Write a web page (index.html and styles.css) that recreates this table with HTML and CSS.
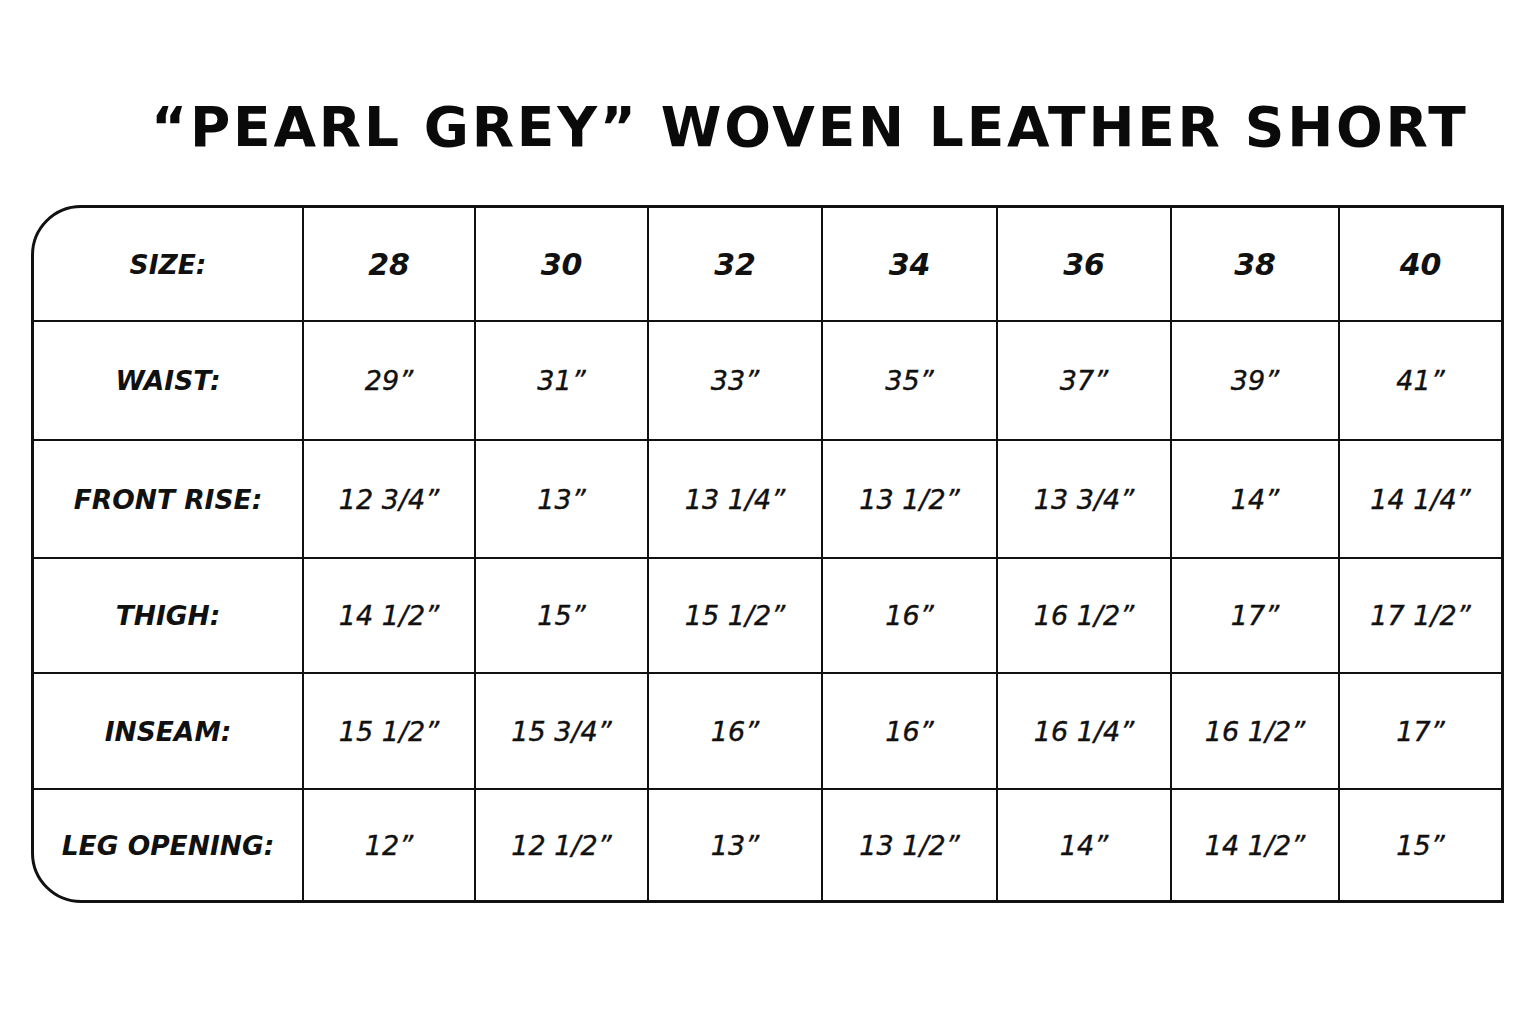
FILE: index.html
```html
<!DOCTYPE html>
<html>
<head>
<meta charset="utf-8">
<link rel="stylesheet" href="styles.css">
</head>
<body>
<div class="page">
  <h1 class="title">“PEARL GREY” WOVEN LEATHER SHORT</h1>
  <div class="chart">
    <div class="cell label">SIZE:</div>
    <div class="cell head">28</div>
    <div class="cell head">30</div>
    <div class="cell head">32</div>
    <div class="cell head">34</div>
    <div class="cell head">36</div>
    <div class="cell head">38</div>
    <div class="cell head last">40</div>

    <div class="cell label">WAIST:</div>
    <div class="cell">29”</div>
    <div class="cell">31”</div>
    <div class="cell">33”</div>
    <div class="cell">35”</div>
    <div class="cell">37”</div>
    <div class="cell">39”</div>
    <div class="cell last">41”</div>

    <div class="cell label">FRONT RISE:</div>
    <div class="cell">12 3/4”</div>
    <div class="cell">13”</div>
    <div class="cell">13 1/4”</div>
    <div class="cell">13 1/2”</div>
    <div class="cell">13 3/4”</div>
    <div class="cell">14”</div>
    <div class="cell last">14 1/4”</div>

    <div class="cell label">THIGH:</div>
    <div class="cell">14 1/2”</div>
    <div class="cell">15”</div>
    <div class="cell">15 1/2”</div>
    <div class="cell">16”</div>
    <div class="cell">16 1/2”</div>
    <div class="cell">17”</div>
    <div class="cell last">17 1/2”</div>

    <div class="cell label">INSEAM:</div>
    <div class="cell">15 1/2”</div>
    <div class="cell">15 3/4”</div>
    <div class="cell">16”</div>
    <div class="cell">16”</div>
    <div class="cell">16 1/4”</div>
    <div class="cell">16 1/2”</div>
    <div class="cell last">17”</div>

    <div class="cell label bottom">LEG OPENING:</div>
    <div class="cell bottom">12”</div>
    <div class="cell bottom">12 1/2”</div>
    <div class="cell bottom">13”</div>
    <div class="cell bottom">13 1/2”</div>
    <div class="cell bottom">14”</div>
    <div class="cell bottom">14 1/2”</div>
    <div class="cell bottom last">15”</div>
  </div>
</div>
</body>
</html>
```
FILE: styles.css
```css
html, body {
  margin: 0;
  padding: 0;
  background: #ffffff;
}
.page {
  width: 1536px;
  height: 1024px;
  display: flex;
  flex-direction: column;
  padding: 0 0 0 31px;
  box-sizing: border-box;
}
.title {
  margin: 93px 0 0 120px;
  height: 112px;
  font-family: "DejaVu Sans", sans-serif;
  font-weight: bold;
  font-size: 55px;
  line-height: 68px;
  letter-spacing: 2.8px;
  color: #0a0a0a;
  white-space: nowrap;
}
.chart {
  width: 1473px;
  box-sizing: border-box;
  border: 3px solid #111;
  border-radius: 50px 0 0 50px;
  overflow: hidden;
  display: grid;
  grid-template-columns: 270px 172px 173px 174px 175px 174px 168px 161px;
  grid-template-rows: 114px 119px 118px 115px 116px 110px;
}
.cell {
  box-sizing: border-box;
  border-right: 2px solid #111;
  border-bottom: 2px solid #111;
  display: flex;
  align-items: center;
  justify-content: center;
  font-family: "DejaVu Sans", sans-serif;
  font-style: italic;
  font-size: 27px;
  color: #111;
  -webkit-text-stroke: 0.4px #111;
  white-space: nowrap;
}
.cell.label, .cell.head {
  font-weight: bold;
  -webkit-text-stroke: 0;
}
.cell.label {
  font-size: 26.5px;
}
.cell.head {
  font-size: 30px;
}
.cell.last {
  border-right: none;
}
.cell.bottom {
  border-bottom: none;
}
```
